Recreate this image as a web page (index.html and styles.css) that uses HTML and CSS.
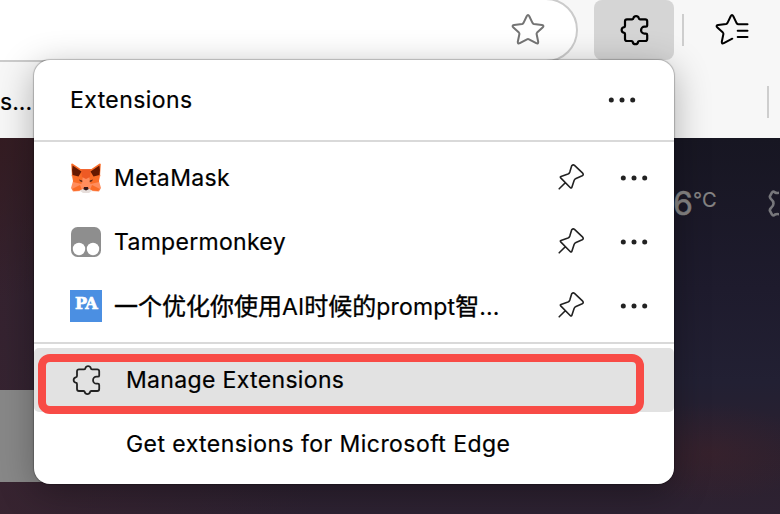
FILE: index.html
```
<!DOCTYPE html>
<html lang="en">
<head>
<meta charset="utf-8">
<title>Extensions</title>
<link rel="stylesheet" href="styles.css">
</head>
<body>
<svg class="defs" width="0" height="0">
  <symbol id="puzzle" viewBox="0 0 32 32" overflow="visible">
    <path d="M9 5.3H14.2Q15.3 5.3 15.4 4.2A2.8 2.8 0 0 1 20.8 4.2Q20.9 5.3 22 5.3H27.2Q29.2 5.3 29.2 7.3V11.4Q29.2 12.7 27.9 12.7H26.5A3.2 3.2 0 0 0 26.5 19.6H27.9Q29.2 19.6 29.2 20.9V25Q29.2 27 27.2 27H21.3Q20.2 27 20.1 28.1A2.8 2.8 0 0 1 14.7 28.1Q14.6 27 13.5 27H9Q7 27 7 25V19.9Q7 18.8 5.7 18.7A2.8 2.8 0 0 1 5.7 13.3Q7 13.2 7 12.1V7.3Q7 5.3 9 5.3Z"/>
  </symbol>
  <symbol id="pin" viewBox="0 0 32 32" overflow="visible">
    <path d="M5.2 22.6L11.3 16.6M17.7 -.4Q19-2.1 20.5-.8L28.7 7Q30 8.6 28.2 9.6L22 12.2Q20.6 12.8 20.1 14.2L17.8 21.2Q17.3 22.3 16.4 21.5L6.7 11.7Q5.8 10.7 7 10.2L14 7.9Q15.2 7.4 15.8 5.9Z" transform="translate(0 4.2)"/>
  </symbol>
  <symbol id="dots" viewBox="0 0 32 8">
    <circle cx="5.3" cy="4" r="2.5"/><circle cx="16" cy="4" r="2.5"/><circle cx="26.7" cy="4" r="2.5"/>
  </symbol>
</svg>
<div class="browser">
  <header class="chrome">
    <div class="toolbar">
      <div class="address">
        <svg class="icon star" viewBox="0 0 36 36"><path d="M16.7 4.2Q18 1.8 19.3 4.2L22.6 11.1Q23 11.8 23.9 12L31.9 13Q34.6 13.6 32.6 15.5L27.1 20.6Q26.5 21.2 26.6 22L28.2 29.8Q28.4 32.2 26.2 31.1L19 27.3Q18 26.8 17 27.3L9.8 31.1Q7.6 32.2 7.8 29.8L9.4 22Q9.5 21.2 8.9 20.6L3.4 15.5Q1.4 13.6 4.1 13L12.1 12Q13 11.8 13.4 11.1Z"/></svg>
      </div>
      <div class="ext-button"><svg class="icon puzzle"><use href="#puzzle"/></svg></div>
      <div class="divider"></div>
      <svg class="icon favorites" viewBox="0 0 36 36"><path d="M33.5 12.2H24.5Q23.3 12.2 22.6 11.1L19.3 4.2Q18 1.8 16.7 4.2L13.4 11.1Q13 11.8 12.1 12L4.1 13Q1.4 13.6 3.4 15.5L8.9 20.6Q9.5 21.2 9.4 22L7.8 29.8Q7.6 32.2 9.8 31.1L18.3 26.7M23.7 18.7H33.5M23.7 25H33.5"/></svg>
    </div>
    <div class="bookmarks"><span>s...</span><div class="divider"></div></div>
  </header>
  <main class="page">
    <div class="weather"><span class="temp">6</span><span class="unit">°C</span>
      <svg class="gear" viewBox="0 0 12 30"><path d="M13 4.5Q10 5.5 8 4.5Q6 2.5 5 4.5L3 8Q2.4 9.5 4 11Q6.5 13 6.5 15.5Q6.5 18 4 20Q2.4 21.5 3 23L5 26.5Q6 28.5 8 26.5Q10 25.5 13 26.5"/></svg>
    </div>
    <div class="tile"></div>
  </main>
</div>

<section class="menu">
  <div class="head"><span class="t-title">Extensions</span><svg class="dots"><use href="#dots"/></svg></div>
  <div class="list">
    <div class="row">
      <svg class="logo" viewBox="0 0 32 32">
        <path fill="#ff8d5d" d="M1.5 13L11 7H21L30.500 13L29 19L31 26L29 29.500L21 29H11L3 29.500L1 26L3 19Z"/>
        <path fill="#fa6c27" d="M3 14L11 7L13 14L11.500 22L3 20ZM29 14L21 7L19 14L20.500 22L29 20ZM2 27L10 23L12 28L4 29ZM30 27L22 23L20 28L28 29Z"/>
        <path fill="#ee5a24" d="M11 7.300H21L20 15L16 17L12 15Z"/>
        <path fill="#fa6c27" d="M1.200 2Q2 .8 3.500 2.200L12 8L8 16L2 14ZM30.800 2Q30 .8 28.500 2.200L20 8L24 16L30 14Z"/>
        <path fill="#661800" d="M2.600 3.500L11.500 9.500L8.500 14.500L2.600 13Q1.500 8 2.600 3.500ZM29.400 3.500L20.500 9.500L23.500 14.500L29.400 13Q30.500 8 29.400 3.500Z"/>
        <path fill="#612a17" d="M9 17.500L12.300 18.500V20.300L10 19.300ZM23 17.500L19.700 18.500V20.300L22 19.300Z"/>
        <path fill="#e6dedb" d="M9.500 28.500L13 27H19L22.500 28.500L19 31H13Z"/>
        <path fill="#341819" d="M14 25H18L18.600 27.300L16 28.600L13.400 27.300Z"/>
      </svg>
      <span class="name t-meta">MetaMask</span><svg class="icon pin"><use href="#pin"/></svg><svg class="dots"><use href="#dots"/></svg>
    </div>
    <div class="row">
      <svg class="logo" viewBox="0 0 32 32"><rect x="1" y="1" width="30" height="30" rx="6.5" fill="#8e8e8e"/><circle cx="9" cy="23" r="6.2" fill="#fff"/><circle cx="23" cy="23" r="6.2" fill="#fff"/></svg>
      <span class="name t-tamper">Tampermonkey</span><svg class="icon pin"><use href="#pin"/></svg><svg class="dots"><use href="#dots"/></svg>
    </div>
    <div class="row">
      <div class="pa">PA</div>
      <span class="name t-cjk">一个优化你使用<span class="lat">AI</span>时候的<span class="lat">prompt</span>智<span class="lat">...</span></span><svg class="icon pin"><use href="#pin"/></svg><svg class="dots"><use href="#dots"/></svg>
    </div>
  </div>
  <div class="actions">
    <div class="action active"><svg class="icon puzzle"><use href="#puzzle"/></svg><span class="t-manage">Manage Extensions</span></div>
    <div class="action"><span class="t-get">Get extensions for Microsoft Edge</span></div>
  </div>
  <div class="marker"></div>
</section>
</body>
</html>
```
FILE: styles.css
```
* { box-sizing: border-box; }
body { margin: 0; width: 780px; height: 514px; overflow: hidden; font-family: Inter, "Noto Sans CJK SC", sans-serif; font-size: 23px; color: #000; -webkit-text-stroke: .2px; }
svg { display: block; flex: none; }
.defs { position: absolute; }
.icon { fill: none; stroke: #222; stroke-width: 1.8; stroke-linecap: round; stroke-linejoin: round; overflow: visible; }
.browser { height: 514px; display: flex; flex-direction: column; overflow: hidden; }
.chrome { height: 138px; background: #f7f7f7; flex: none; }
.toolbar { height: 60px; display: flex; align-items: center; }
.address { width: 638px; height: 64px; margin-left: -60px; border: 2px solid #cbcbcb; border-radius: 32px; background: #fff; display: flex; align-items: center; justify-content: flex-end; padding-right: 30px; flex: none; }
.star { width: 36px; height: 36px; stroke: #747474; stroke-width: 2; }
.ext-button { width: 80px; height: 60px; margin-left: 16px; border-radius: 8px; background: #d5d5d5; display: flex; align-items: center; justify-content: center; }
.puzzle { width: 32px; height: 32px; }
.ext-button .puzzle { stroke: #000; stroke-width: 2.2; }
.divider { width: 2px; height: 32px; background: #cecece; }
.toolbar .divider { margin-left: 8px; }
.favorites { width: 36px; height: 36px; margin-left: 30px; stroke: #000; stroke-width: 2; }
.bookmarks { height: 78px; display: flex; align-items: center; justify-content: space-between; padding: 6px 11px 0 0; }
.bookmarks span { line-height: 28px; }
.page { flex: 1; display: flex; flex-direction: column; justify-content: space-between; padding: 47px 0 32px; background:
  radial-gradient(ellipse 100px 50px at 710px 315px, rgba(70,35,42,.4), transparent),
  radial-gradient(ellipse 150px 160px at 0 0, rgba(52,27,32,.85), transparent),
  linear-gradient(90deg, rgba(57,36,48,.85), transparent 40%),
  linear-gradient(#171622, #1e1b2d 40%, #222033 65%, #2c202e 85%, #2d2232); }
.weather { display: flex; align-items: flex-start; padding-left: 673px; color: #858484; height: 40px; }
.temp { font-size: 32px; line-height: 38px; width: 20px; -webkit-text-stroke: .6px; }
.unit { font-size: 20px; line-height: 30px; width: 74px; }
.gear { width: 12px; height: 30px; margin-top: 3px; fill: none; stroke: #77777b; stroke-width: 2.6; }
.tile { width: 60px; height: 92px; background: #888; }
.menu { position: absolute; left: 34px; top: 60px; width: 640px; height: 424px; border-radius: 16px; background: #fff; box-shadow: 0 0 1px 1px rgba(0,0,0,.22), 0 8px 36px rgba(0,0,0,.3); }
.head { height: 82px; border-bottom: 2px solid #d9d9d9; display: flex; align-items: center; justify-content: space-between; padding: 0 36px; }
.dots { width: 32px; height: 8px; fill: #222; }
.list { height: 202px; padding-top: 4px; border-bottom: 2px solid #d9d9d9; }
.row { height: 64px; display: flex; align-items: center; padding: 0 24px 0 36px; }
.logo, .pa { width: 32px; height: 32px; flex: none; }
.pa { background: #4b8fe2; color: #fff; font: bold 16px/27px "DejaVu Serif", serif; text-align: center; letter-spacing: -.6px; -webkit-text-stroke: .7px #fff; }
.name { margin-left: 12px; flex: 1; white-space: nowrap; }
.pin { width: 32px; height: 32px; margin-right: 32px; stroke-width: 1.6; }
.t-title { letter-spacing: .41px; }
.t-meta { letter-spacing: .35px; }
.t-tamper { letter-spacing: .3px; }
.t-manage { letter-spacing: .34px; }
.t-get { letter-spacing: .44px; }
.t-cjk { font-family: "Noto Sans CJK SC", sans-serif; font-size: 24px; line-height: 32px; padding-bottom: 1px; -webkit-text-stroke: .35px; }
.lat { font-family: Inter, sans-serif; font-size: 23px; letter-spacing: .15px; -webkit-text-stroke: .2px; }
.actions { padding-top: 4px; }
.action { height: 64px; display: flex; align-items: center; padding-left: 92px; white-space: nowrap; }
.active { background: #e2e2e2; border-radius: 5px; padding-left: 36px; gap: 24px; }
.marker { position: absolute; left: 4px; top: 294px; width: 606px; height: 60px; border: 8px solid #f84b46; border-radius: 12px; }
```
